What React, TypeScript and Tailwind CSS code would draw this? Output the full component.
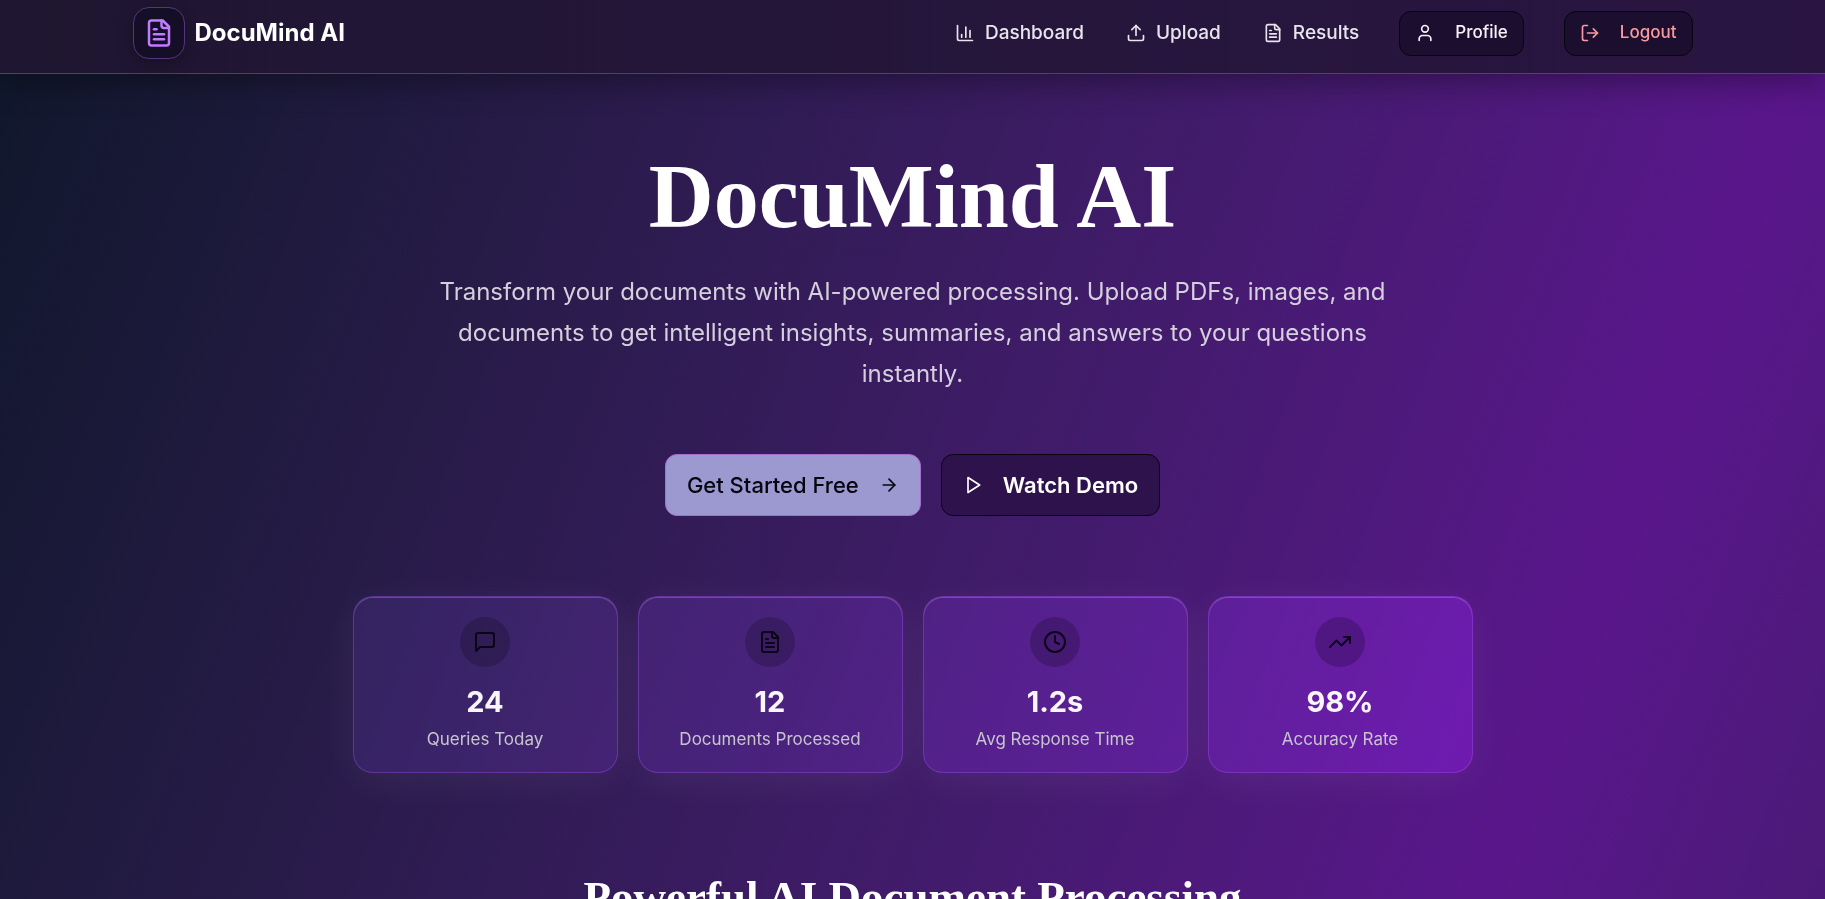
import type { ReactNode } from "react";

type IconProps = { className?: string; children: ReactNode };

function Icon({ className = "size-5", children }: IconProps) {
  return (
    <svg
      viewBox="0 0 24 24"
      fill="none"
      stroke="currentColor"
      strokeWidth="2"
      strokeLinecap="round"
      strokeLinejoin="round"
      aria-hidden="true"
      className={`shrink-0 ${className}`}
    >
      {children}
    </svg>
  );
}

const filePaths = (
  <>
    <path d="M15 2H6a2 2 0 0 0-2 2v16a2 2 0 0 0 2 2h12a2 2 0 0 0 2-2V7Z" />
    <path d="M14 2v4a2 2 0 0 0 2 2h4" />
    <path d="M10 9H8" />
    <path d="M16 13H8" />
    <path d="M16 17H8" />
  </>
);

const chartPaths = (
  <>
    <path d="M3 3v16a2 2 0 0 0 2 2h16" />
    <path d="M18 17V9" />
    <path d="M13 17V5" />
    <path d="M8 17v-3" />
  </>
);

const uploadPaths = (
  <>
    <path d="M21 15v4a2 2 0 0 1-2 2H5a2 2 0 0 1-2-2v-4" />
    <path d="m17 8-5-5-5 5" />
    <path d="M12 3v12" />
  </>
);

const links = [
  { label: "Dashboard", icon: chartPaths },
  { label: "Upload", icon: uploadPaths },
  { label: "Results", icon: filePaths },
];

const stats = [
  {
    value: "24",
    label: "Queries Today",
    icon: <path d="M21 15a2 2 0 0 1-2 2H7l-4 4V5a2 2 0 0 1 2-2h14a2 2 0 0 1 2 2z" />,
  },
  { value: "12", label: "Documents Processed", icon: filePaths },
  {
    value: "1.2s",
    label: "Avg Response Time",
    icon: (
      <>
        <circle cx="12" cy="12" r="10" />
        <path d="M12 6v6l4 2" />
      </>
    ),
  },
  {
    value: "98%",
    label: "Accuracy Rate",
    icon: (
      <>
        <path d="m22 7-8.500 8.500-5-5L2 17" />
        <path d="M16 7h6v6" />
      </>
    ),
  },
];

function Navbar() {
  return (
    <header className="relative z-10 border-b border-white/20 bg-linear-to-r from-[#1f1632] to-[#2a1542] pt-[7px] pb-[14px] shadow-[0_8px_32px_rgba(0,0,0,0.35)]">
      <nav className="mx-auto flex max-w-[1560px] items-center justify-between">
        <a href="#home" className="flex items-center gap-[10px] text-2xl font-bold text-white">
          <span className="flex size-[52px] items-center justify-center rounded-2xl border border-[#56347f] bg-[#140e26] text-[#c27aff] shadow-[0_4px_16px_rgba(0,0,0,0.3)]">
            <Icon className="size-[30px]">{filePaths}</Icon>
          </span>
          DocuMind AI
        </a>
        <div className="flex items-center gap-10">
          <div className="flex items-center gap-[42px]">
            {links.map((link) => (
              <a
                key={link.label}
                href={`#${link.label.toLowerCase()}`}
                className="flex items-center gap-[10px] text-[19px] font-medium text-[#e8e4ec]"
              >
                <Icon>{link.icon}</Icon>
                {link.label}
              </a>
            ))}
          </div>
          <button
            type="button"
            className="flex h-[45px] items-center gap-5 rounded-xl border border-[#07030f] bg-[#1c0e2e] px-[15px] text-[17px] font-medium text-[#f5f2f8]"
          >
            <Icon>
              <path d="M19 21v-2a4 4 0 0 0-4-4H9a4 4 0 0 0-4 4v2" />
              <circle cx="12" cy="7" r="4" />
            </Icon>
            Profile
          </button>
          <button
            type="button"
            className="flex h-[45px] items-center gap-5 rounded-xl border border-[#07030f] bg-[#1c0e2e] px-[15px] text-[17px] font-medium text-[#f99a9c]"
          >
            <Icon>
              <path d="M9 21H5a2 2 0 0 1-2-2V5a2 2 0 0 1 2-2h4" />
              <path d="m16 17 5-5-5-5" />
              <path d="M21 12H9" />
            </Icon>
            Logout
          </button>
        </div>
      </nav>
    </header>
  );
}

export default function App() {
  return (
    <div className="min-h-screen bg-[linear-gradient(111deg_in_oklab,#0f172b_0px,#59168b_1704px,#0f172b_3408px)] font-['Inter','Liberation_Sans',sans-serif] text-white">
      <Navbar />
      <main>
        <section className="mx-auto flex max-w-[1120px] flex-col items-center pt-[73px] text-center">
          <h1 className="font-['Liberation_Serif',serif] text-[90px] leading-[99px] font-bold">
            DocuMind AI
          </h1>
          <p className="mt-[25px] max-w-[960px] text-2xl leading-[41px] text-[#d6cfdd]">
            Transform your documents with AI-powered processing. Upload PDFs, images, and documents
            to get intelligent insights, summaries, and answers to your questions instantly.
          </p>
          <div className="mt-[60px] flex gap-5">
            <button
              type="button"
              className="flex h-[62px] items-center gap-5 rounded-xl border border-[#a66fcf] bg-[#9b99cf] px-[21px] text-[22px] font-medium text-[#08050f]"
            >
              Get Started Free
              <Icon>
                <path d="M5 12h14" />
                <path d="m12 5 7 7-7 7" />
              </Icon>
            </button>
            <button
              type="button"
              className="flex h-[62px] items-center gap-5 rounded-xl border border-[#0a0412] bg-[#2e124c] px-[21px] text-[22px] font-semibold text-white"
            >
              <Icon>
                <path d="m6 3 14 9-14 9z" />
              </Icon>
              Watch Demo
            </button>
          </div>
          <ul className="mt-20 grid w-full grid-cols-4 gap-5">
            {stats.map((stat) => (
              <li
                key={stat.label}
                className="flex flex-col items-center rounded-[20px] border border-[#a855f7]/35 bg-white/5 py-5 shadow-[0_8px_40px_rgba(255,255,255,0.06),inset_0_1px_0_rgba(255,255,255,0.2)] backdrop-saturate-140"
              >
                <span className="flex size-[50px] items-center justify-center rounded-full bg-black/20 text-[#0b0518]">
                  <Icon className="size-6">{stat.icon}</Icon>
                </span>
                <span className="mt-[15px] text-[29px] leading-10 font-bold text-[#f8f6fb]">
                  {stat.value}
                </span>
                <span className="mt-[5px] text-[17px] leading-[25px] text-[#c8c4cf]">
                  {stat.label}
                </span>
              </li>
            ))}
          </ul>
        </section>
        <section className="pt-[97px] text-center">
          <h2 className="font-['Liberation_Serif',serif] text-[45px] leading-[54px] font-bold">
            Powerful AI Document Processing
          </h2>
        </section>
      </main>
    </div>
  );
}
